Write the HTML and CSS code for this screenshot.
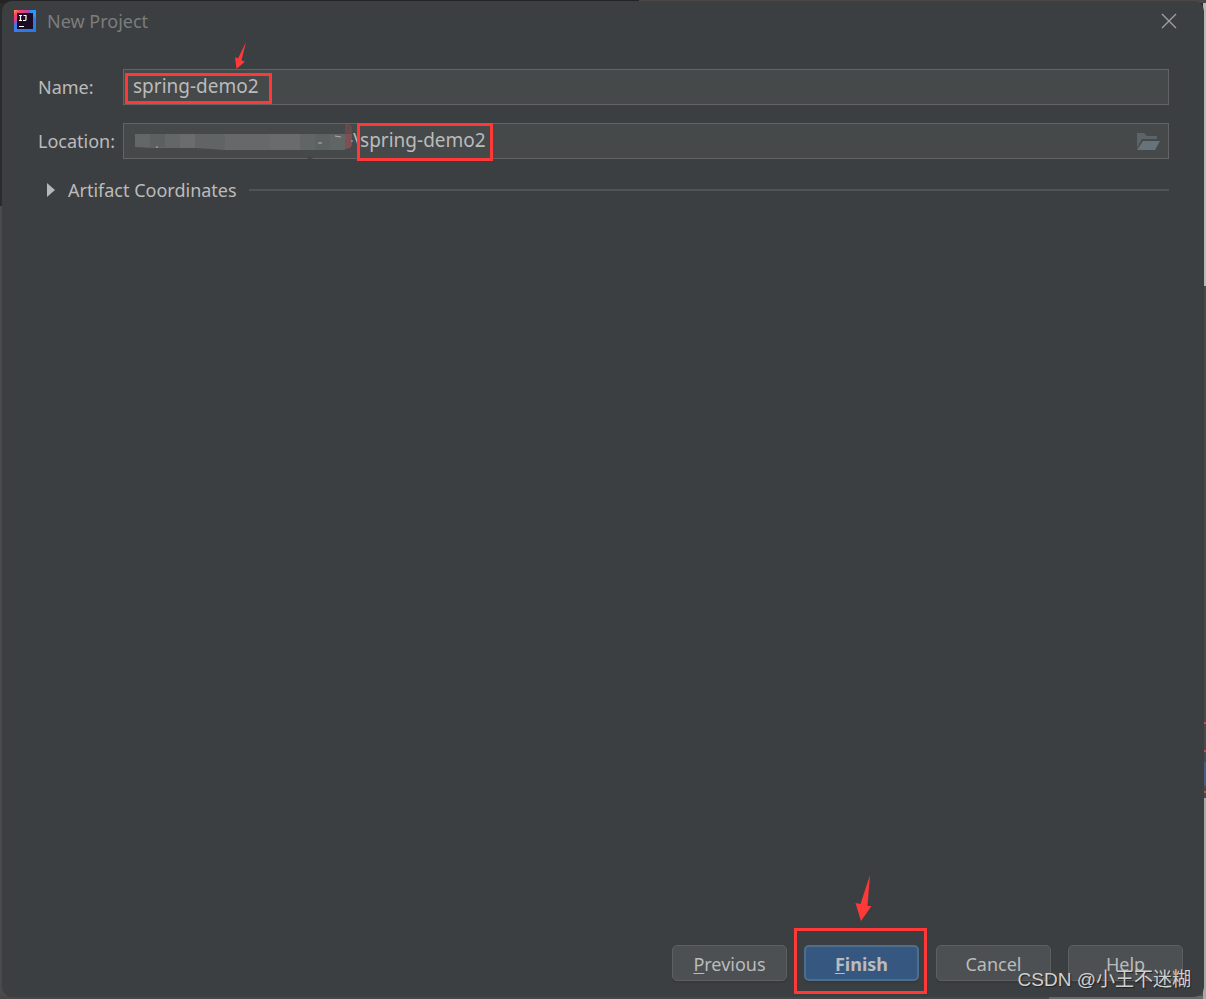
FILE: index.html
```html
<!DOCTYPE html>
<html lang="en">
<head>
<meta charset="utf-8">
<title>New Project</title>
<link rel="stylesheet" href="styles.css">
</head>
<body>
<div class="desktop">
  <main class="dialog">
    <header class="titlebar">
      <svg class="logo" viewBox="0 0 22 22" aria-hidden="true">
        <defs>
          <linearGradient id="edge" x1="0" y1="0" x2="1" y2="1">
            <stop offset="0" stop-color="#ffa04a"/>
            <stop offset=".14" stop-color="#f8406c"/>
            <stop offset=".36" stop-color="#c0409c"/>
            <stop offset=".5" stop-color="#3f76e5"/>
            <stop offset="1" stop-color="#1680f0"/>
          </linearGradient>
        </defs>
        <rect width="22" height="22" fill="url(#edge)"/>
        <path d="M16 0h6v8l-6-4z" fill="#2a96f8"/>
        <path d="M0 14l4-3v11H0z" fill="#3d78ee"/>
        <rect x="3" y="3" width="16" height="16" fill="#1c0a20"/>
        <path d="M5 5.500h3M6.500 5.500v5M5 10.500h3M9.500 5.500h2.500v4q0 1-1 1H9M5 16.500h5" fill="none" stroke="#fff" stroke-width="1.200"/>
      </svg>
      <h1 class="title">New Project</h1>
      <button class="close" type="button" aria-label="Close">
        <svg viewBox="0 0 16 16" width="16" height="16"><path d="M1 1l14 14M15 1L1 15" fill="none" stroke="#a0a2a3" stroke-width="1.300"/></svg>
      </button>
    </header>
    <form class="form" id="project">
      <label class="label" for="name">Name:</label>
      <div class="field">
        <input class="input" id="name" type="text" value="spring-demo2">
        <span class="mark mark-name"></span>
        <svg class="arrow arrow-name" viewBox="0 0 14 28" aria-hidden="true"><path d="M13 0L8.500 18.500l3.500 1L3.500 27 2 15l3 1.500z" fill="#ff3838"/></svg>
      </div>
      <label class="label" for="location">Location:</label>
      <div class="field">
        <input class="input input-location" id="location" type="text" value="\spring-demo2">
        <svg class="smudge" viewBox="0 0 220 36" aria-hidden="true">
          <path d="M0 11h45v14H20l-20-1z" fill="#646768"/>
          <path d="M15 11h15v13H15z" fill="#5c6061"/>
          <path d="M45 11h15v14H45z" fill="#6a6c6d"/>
          <path d="M60 11h30v16L60 25z" fill="#606465"/>
          <path d="M90 11h45v16H90z" fill="#666869"/>
          <path d="M135 11h30v16h-30z" fill="#696b6c"/>
          <path d="M165 11h45v16h-45z" fill="#606566"/>
          <path d="M180 11h15v16h-15z" fill="#5c6162"/>
          <path d="M210 1q7 0 7 5v15q0 5-7 5z" fill="#7e5051"/>
          <path d="M210 1q7 0 7 5v5h-7z" fill="#654a4b"/>
          <path d="M200 13l6 1M183 20h4M21 24h2M217 17v2" fill="none" stroke="#b5b1a8"/>
          <path d="M171 34h8l-2 2h-4z" fill="#414648"/>
        </svg>
        <span class="mark mark-location"></span>
        <button class="browse" type="button" aria-label="Browse">
          <svg viewBox="0 0 24 18" width="24" height="18"><path d="M0 0h7l3 3h10v3H5L0 15z" fill="#5b6468"/><path d="M6 8h17l-5 9H0z" fill="#67737a"/></svg>
        </button>
      </div>
    </form>
    <section class="section">
      <button class="toggle" type="button" aria-expanded="false">
        <svg viewBox="0 0 8 14" width="8" height="14"><path d="M0 0l8 7-8 7z" fill="#b5b7b8"/></svg>
        <span>Artifact Coordinates</span>
      </button>
      <span class="rule"></span>
    </section>
    <footer class="footer">
      <button class="button" type="button"><u>P</u>revious</button>
      <div class="finish">
        <button class="button primary" type="submit" form="project"><u>F</u>inish</button>
        <span class="mark mark-finish"></span>
        <svg class="arrow arrow-finish" viewBox="0 0 18 46" aria-hidden="true"><path d="M16 0l-2.500 31h4L7 46 1.500 28l5 1z" fill="#ff3838"/></svg>
      </div>
      <button class="button" type="button">Cancel</button>
      <button class="button" type="button">Help</button>
    </footer>
  </main>
  <p class="watermark" lang="zh">CSDN @小王不迷糊</p>
</div>
</body>
</html>
```
FILE: styles.css
```css
* { box-sizing: border-box; }

body {
  margin: 0;
  background: #2b2b2b;
  color: #bbbbbb;
  font-family: "Noto Sans", "Noto Sans CJK SC", sans-serif;
  font-size: 18px;
  line-height: 24px;
}

button, input { font: inherit; color: inherit; }
button { padding: 0; border: 0; background: none; }

.desktop {
  position: relative;
  display: flex;
  min-height: 100vh;
  padding: 1px 2px 2px 2px;
  background:
    linear-gradient(#b8b8b8, #b8b8b8) right 3px / 3px 283px no-repeat,
    linear-gradient(#d04a4a, #d04a4a) right 722px / 2px 2px no-repeat,
    linear-gradient(#d04a4a, #d04a4a) right 750px / 2px 2px no-repeat,
    linear-gradient(#465f80, #465f80) right 762px / 2px 24px no-repeat,
    linear-gradient(#d04a4a, #d04a4a) right 791px / 2px 2px no-repeat,
    linear-gradient(#a8a8a8, #a8a8a8) right bottom / 3px 201px no-repeat,
    linear-gradient(90deg, #4a4444 87%, #686868 87%) left bottom / 100% 3px no-repeat,
    linear-gradient(90deg, #242424 53%, #4b4747 53%) left top / 100% 3px no-repeat,
    linear-gradient(#2b2b2b 206px, #4a4a4a 206px);
}

.dialog {
  display: flex;
  flex: 1;
  flex-direction: column;
  min-width: 0;
  border-radius: 10px;
  background: #3c3f41;
}

.titlebar {
  display: flex;
  align-items: center;
  gap: 11px;
  height: 40px;
  padding: 0 27px 0 12px;
}

.logo { width: 22px; height: 22px; }

.title {
  flex: 1;
  margin: 0;
  color: #7b7d7e;
  font-size: 18px;
  font-weight: 400;
}

.close, .browse { display: flex; }

.form {
  display: grid;
  grid-template-columns: 77px 1fr;
  gap: 18px 8px;
  align-items: center;
  padding: 28px 35px 0 36px;
}

.label { white-space: nowrap; }
.field { position: relative; }

.input {
  display: block;
  width: 100%;
  height: 36px;
  padding: 0 9px 2px;
  border: 1px solid #646464;
  border-radius: 0;
  outline: 0;
  background: #45494a;
  font-size: 19px;
}

.input-location { padding: 0 44px 2px 229px; }

.smudge {
  position: absolute;
  top: 0;
  left: 12px;
  width: 220px;
  height: 36px;
}

.browse {
  position: absolute;
  top: 10px;
  right: 8px;
}

.mark {
  position: absolute;
  border: 3px solid #ff3838;
  pointer-events: none;
}

.mark-name { top: 4px; left: 2px; width: 147px; height: 31px; }
.mark-location { top: 0; left: 234px; width: 136px; height: 38px; }
.mark-finish { inset: -17px -8px -13px -10px; }

.arrow { position: absolute; }
.arrow-name { bottom: 35px; left: 110px; width: 14px; height: 28px; }
.arrow-finish { bottom: 60px; left: 50px; width: 18px; height: 46px; }

.section {
  display: flex;
  align-items: center;
  gap: 12px;
  padding: 19px 35px 0 45px;
}

.toggle {
  display: flex;
  align-items: center;
  gap: 13px;
}

.rule {
  flex: 1;
  height: 2px;
  background: #515355;
}

.footer {
  display: flex;
  justify-content: flex-end;
  gap: 17px;
  margin-top: auto;
  padding: 0 21px 16px;
}

.finish { position: relative; }

.button {
  width: 115px;
  height: 36px;
  padding-top: 2px;
  border: 1px solid #5e6060;
  border-radius: 5px;
  background: #4c5052;
  box-shadow: 0 2px 1px #37393b;
}

.button u { text-underline-offset: 2px; text-decoration-thickness: 1px; }

.primary {
  border: 2px solid #4c708c;
  background: #365880;
  font-weight: 700;
}

.watermark {
  position: absolute;
  right: 15px;
  bottom: 7px;
  margin: 0;
  color: #d0d0d0;
  font-family: "Liberation Sans", "Noto Sans CJK SC", sans-serif;
  font-size: 19px;
  text-shadow: 1px 1px 1px #222222;
}
```
